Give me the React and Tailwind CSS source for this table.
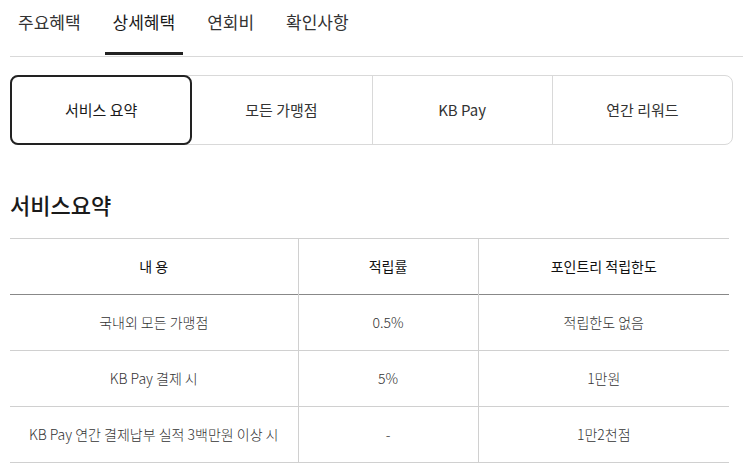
const TopTabs = () => {
  const tabs = ['주요혜택', '상세혜택', '연회비', '확인사항'];
  return (
    <div className="ml-[10px] flex h-[57px] gap-[16px] border-b border-[#d9d9d9]">
      {tabs.map((t, i) => (
        <div
          key={t}
          className={`relative flex items-start px-[8px] pt-[9px] text-[17px] ${
            i === 1 ? 'text-[#1a1a1a]' : 'text-[#333]'
          }`}
        >
          {t}
          {i === 1 && <span className="absolute bottom-[1px] left-0 right-0 h-[3px] bg-[#222]" />}
        </div>
      ))}
    </div>
  );
};

const Segments = () => {
  const items = ['서비스 요약', '모든 가맹점', 'KB Pay', '연간 리워드'];
  return (
    <div className="mx-[10px] mt-[18px] grid h-[70px] grid-cols-4 rounded-[8px] border border-[#d9d9d9]">
      {items.map((t, i) => (
        <div
          key={t}
          className={`flex items-center justify-center text-[15px] ${
            i === 0
              ? '-m-px rounded-[8px] border-2 border-[#222] text-[#1a1a1a]'
              : 'border-l border-[#d9d9d9] text-[#333]'
          } ${i === 1 ? 'border-l-0' : ''}`}
        >
          {t}
        </div>
      ))}
    </div>
  );
};

const rows = [
  ['국내외 모든 가맹점', '0.5%', '적립한도 없음'],
  ['KB Pay 결제 시', '5%', '1만원'],
  ['KB Pay 연간 결제납부 실적 3백만원 이상 시', '-', '1만2천점'],
];

export default function App() {
  return (
    <div
      className="h-[476px] w-[743px] overflow-hidden bg-white text-[#333]"
      style={{ fontFamily: '"Noto Sans CJK KR", "Noto Sans", sans-serif' }}
    >
      <TopTabs />
      <Segments />
      <h2 className="ml-[10px] mt-[44px] text-[22px] font-medium leading-[30px] text-[#1a1a1a]">서비스요약</h2>
      <table className="ml-[10px] mt-[19px] w-[719px] border-collapse text-[14px]">
        <thead>
          <tr className="h-[56px] border-t border-b border-t-[#d0d0d0] border-b-[#888]">
            <th className="w-[288px] font-normal text-[#111]">내 용</th>
            <th className="w-[180px] border-l border-[#d0d0d0] font-normal text-[#111]">적립률</th>
            <th className="border-l border-[#d0d0d0] font-normal text-[#111]">포인트리 적립한도</th>
          </tr>
        </thead>
        <tbody>
          {rows.map((r, i) => (
            <tr key={i} className={`h-[56px] border-[#d0d0d0] ${i === 0 ? '' : 'border-t'} ${i === 2 ? 'border-b' : ''}`}>
              <td className="text-center font-light">{r[0]}</td>
              <td className="border-l border-[#d0d0d0] text-center font-light">{r[1]}</td>
              <td className="border-l border-[#d0d0d0] text-center font-light">{r[2]}</td>
            </tr>
          ))}
        </tbody>
      </table>
    </div>
  );
}
